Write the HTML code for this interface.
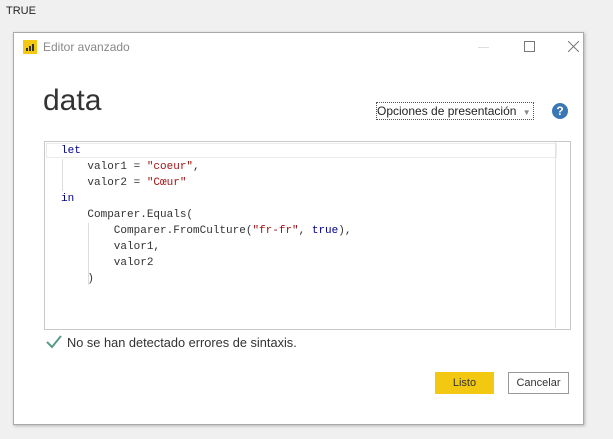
<!DOCTYPE html>
<html><head><style>
body{margin:0;width:613px;height:439px;background:#f0f0f0;font-family:"Liberation Sans",sans-serif;position:relative;overflow:hidden}
.a{position:absolute}
.code{font-family:"Liberation Mono",monospace;font-size:11px;color:#333;white-space:pre;line-height:16px}
.k{color:#00008b}.s{color:#a31515}
</style></head><body>
<div class="a" style="left:6px;top:5px;font-size:11px;color:#222">TRUE</div>
<div class="a" style="left:13px;top:32px;width:569px;height:391px;background:#fff;border:1px solid #aaa;box-shadow:1px 1px 3px rgba(0,0,0,.25)"></div>
<div class="a" style="left:23px;top:40px;width:14px;height:14px;background:#f2c811"></div>
<svg class="a" style="left:23px;top:40px" width="14" height="14"><rect x="3" y="8" width="2" height="3" fill="#333"/><rect x="6" y="6" width="2" height="5" fill="#333"/><rect x="9" y="4" width="2" height="7" fill="#333"/></svg>
<div class="a" style="left:43px;top:40px;font-size:12px;color:#888">Editor avanzado</div>
<div class="a" style="left:478px;top:47px;width:11px;height:1px;background:#ddd"></div>
<div class="a" style="left:524px;top:41px;width:9px;height:9px;border:1px solid #777"></div>
<svg class="a" style="left:568px;top:41px" width="11" height="11"><path d="M0 0L11 11M11 0L0 11" stroke="#777" stroke-width="1"/></svg>
<div class="a" style="left:43px;top:84px;font-size:30px;color:#333;font-weight:300">data</div>
<div class="a" style="left:376px;top:102px;width:156px;height:16px;border:1px dotted #555;font-size:12px;color:#222;line-height:16px">Opciones de presentación <span style="font-size:8px;color:#888;margin-left:3px">▼</span></div>
<div class="a" style="left:552px;top:103px;width:16px;height:16px;border-radius:50%;background:#3a78b5;color:#fff;font-size:12px;font-weight:bold;text-align:center;line-height:16px">?</div>
<div class="a" style="left:44px;top:141px;width:525px;height:187px;border:1px solid #c8c8c8"></div>
<div class="a" style="left:555px;top:142px;width:1px;height:186px;background:#e4e4e4"></div>
<div class="a" style="left:46px;top:143px;width:509px;height:13px;border:1px solid #eaeaea"></div>
<div class="a" style="left:62px;top:159px;width:1px;height:32px;background:#ddd"></div>
<div class="a" style="left:88px;top:223px;width:1px;height:62px;background:#ddd"></div>
<div class="a code" style="left:61px;top:143px"><span class="k">let</span>
    valor1 = <span class="s">"coeur"</span>,
    valor2 = <span class="s">"Cœur"</span>
<span class="k">in</span>
    Comparer.Equals(
        Comparer.FromCulture(<span class="s">"fr-fr"</span>, <span class="k">true</span>),
        valor1,
        valor2
    )</div>
<svg class="a" style="left:46px;top:335px" width="16" height="14"><path d="M1 7L6 12L15 1" stroke="#5a9a8a" stroke-width="2" fill="none"/></svg>
<div class="a" style="left:67px;top:335px;font-size:12.8px;color:#333">No se han detectado errores de sintaxis.</div>
<div class="a" style="left:435px;top:372px;width:59px;height:22px;background:#f2c811;font-size:11px;color:#333;text-align:center;line-height:22px">Listo</div>
<div class="a" style="left:508px;top:372px;width:59px;height:20px;border:1px solid #999;font-size:11px;color:#333;text-align:center;line-height:20px">Cancelar</div>
</body></html>
